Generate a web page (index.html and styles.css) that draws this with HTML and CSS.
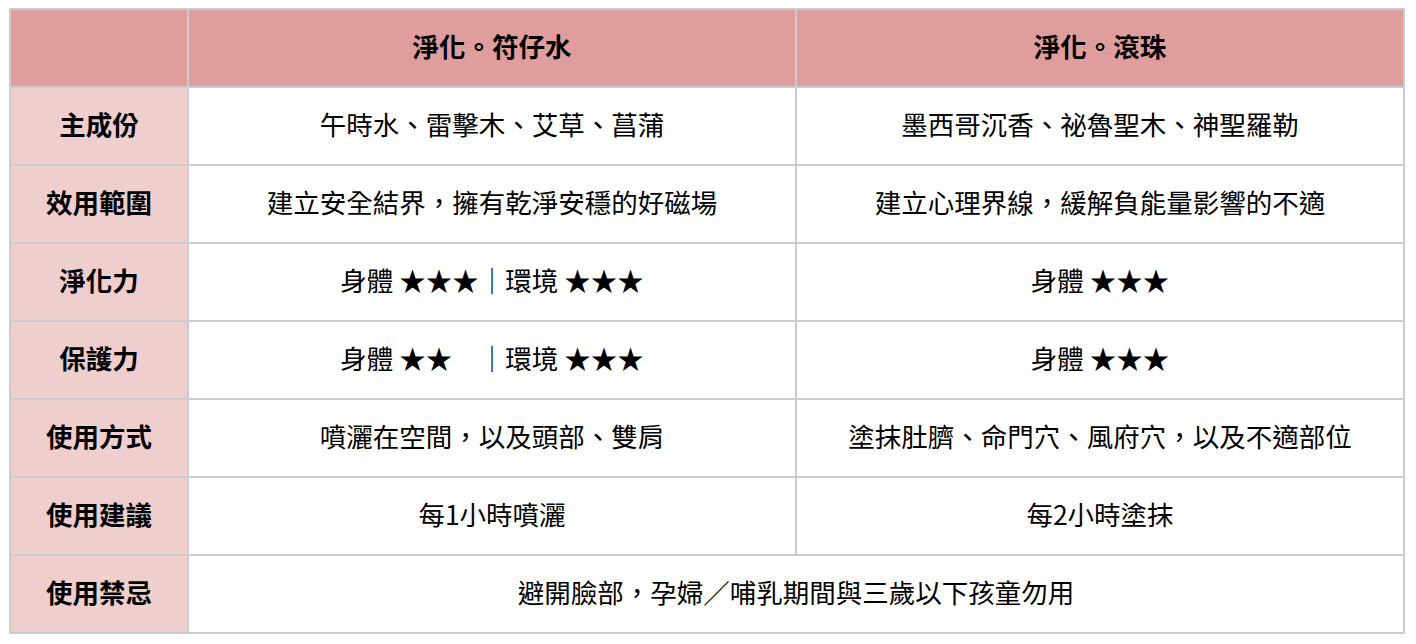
FILE: index.html
```html
<!DOCTYPE html>
<html lang="zh-Hant">
<head>
<meta charset="utf-8">
<title>淨化比較</title>
<link rel="stylesheet" href="styles.css">
</head>
<body>
<div class="wrap">
<table class="cmp">
  <colgroup>
    <col class="c-label">
    <col class="c-val">
    <col class="c-val">
  </colgroup>
  <thead>
    <tr>
      <th class="corner"></th>
      <th class="head">淨化。符仔水</th>
      <th class="head">淨化。滾珠</th>
    </tr>
  </thead>
  <tbody>
    <tr>
      <th class="label">主成份</th>
      <td>午時水、雷擊木、艾草、菖蒲</td>
      <td>墨西哥沉香、祕魯聖木、神聖羅勒</td>
    </tr>
    <tr>
      <th class="label">效用範圍</th>
      <td>建立安全結界，擁有乾淨安穩的好磁場</td>
      <td>建立心理界線，緩解負能量影響的不適</td>
    </tr>
    <tr>
      <th class="label">淨化力</th>
      <td>身體 ★★★｜環境 ★★★</td>
      <td>身體 ★★★</td>
    </tr>
    <tr>
      <th class="label">保護力</th>
      <td>身體 ★★　｜環境 ★★★</td>
      <td>身體 ★★★</td>
    </tr>
    <tr>
      <th class="label">使用方式</th>
      <td>噴灑在空間，以及頭部、雙肩</td>
      <td>塗抹肚臍、命門穴、風府穴，以及不適部位</td>
    </tr>
    <tr>
      <th class="label">使用建議</th>
      <td>每1小時噴灑</td>
      <td>每2小時塗抹</td>
    </tr>
    <tr>
      <th class="label">使用禁忌</th>
      <td colspan="2">避開臉部，孕婦／哺乳期間與三歲以下孩童勿用</td>
    </tr>
  </tbody>
</table>
</div>
</body>
</html>
```

FILE: styles.css
```css
html, body {
  margin: 0;
  padding: 0;
  background: #ffffff;
}

.wrap {
  padding: 8px 0 0 9px;
}

.cmp {
  width: 1396px;
  table-layout: fixed;
  border-collapse: separate;
  border-spacing: 2px;
  background: #cccccc;
  font-family: "Noto Sans CJK TC", "Noto Sans CJK SC", "Noto Sans", sans-serif;
  font-size: 26.5px;
  color: #000000;
}

.c-label { width: 176px; }
.c-val { width: 606px; }

.cmp th,
.cmp td {
  height: 71px;
  padding: 0 0 5px 0;
  text-align: center;
  vertical-align: middle;
  line-height: 1.2;
  white-space: nowrap;
}

.cmp td {
  background: #ffffff;
  font-weight: 400;
}

.corner,
.head {
  background: #df9e9d;
  font-weight: 700;
}

.label {
  background: #eecfce;
  font-weight: 700;
}
```
